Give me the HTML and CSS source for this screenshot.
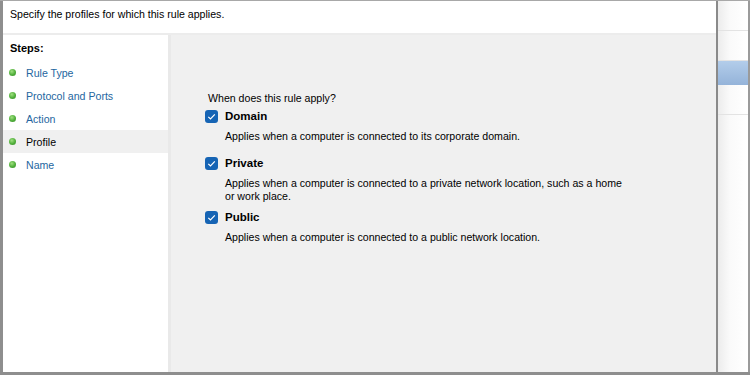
FILE: index.html
```html
<!DOCTYPE html>
<html lang="en">
<head>
    <meta charset="UTF-8">
    <meta name="viewport" content="width=device-width, initial-scale=1.0">
    <title>New Inbound Rule Wizard - Profile</title>
    <link rel="stylesheet" href="styles.css">
</head>
<body>
    <div class="screen">
        <div class="wizard">
            <header class="wizardHeader">
                <p class="headerText">Specify the profiles for which this rule applies.</p>
            </header>
            <div class="wizardBody">
                <nav class="steps">
                    <h3 class="stepsTitle">Steps:</h3>
                    <ul class="stepList">
                        <li class="step"><span class="dot"></span><a class="stepLink">Rule Type</a></li>
                        <li class="step"><span class="dot"></span><a class="stepLink">Protocol and Ports</a></li>
                        <li class="step"><span class="dot"></span><a class="stepLink">Action</a></li>
                        <li class="step current"><span class="dot"></span><a class="stepLink">Profile</a></li>
                        <li class="step"><span class="dot"></span><a class="stepLink">Name</a></li>
                    </ul>
                </nav>
                <main class="content">
                    <p class="question">When does this rule apply?</p>
                    <div class="option">
                        <label class="optionLabel"><span class="check"><svg viewBox="0 0 13 13" width="13" height="13"><path d="M3.3 6.8 L5.5 9 L9.8 4.4" fill="none" stroke="#fff" stroke-width="1.2"/></svg></span>Domain</label>
                        <p class="optionDesc">Applies when a computer is connected to its corporate domain.</p>
                    </div>
                    <div class="option">
                        <label class="optionLabel"><span class="check"><svg viewBox="0 0 13 13" width="13" height="13"><path d="M3.3 6.8 L5.5 9 L9.8 4.4" fill="none" stroke="#fff" stroke-width="1.2"/></svg></span>Private</label>
                        <p class="optionDesc">Applies when a computer is connected to a private network location, such as a home<br>or work place.</p>
                    </div>
                    <div class="option tight">
                        <label class="optionLabel"><span class="check"><svg viewBox="0 0 13 13" width="13" height="13"><path d="M3.3 6.8 L5.5 9 L9.8 4.4" fill="none" stroke="#fff" stroke-width="1.2"/></svg></span>Public</label>
                        <p class="optionDesc">Applies when a computer is connected to a public network location.</p>
                    </div>
                </main>
            </div>
        </div>
        <div class="behind">
            <div class="behindRow"></div>
            <div class="behindRow"></div>
            <div class="behindRow selected"></div>
            <div class="behindRow"></div>
        </div>
    </div>
</body>
</html>
```

FILE: styles.css
```css
html, body {
  margin: 0;
  padding: 0;
  width: 750px;
  height: 375px;
  overflow: hidden;
  font-family: "Liberation Sans", Arial, sans-serif;
  font-size: 10.6px;
  color: #000;
  background-color: #fff;
}

.screen {
  display: flex;
  height: 375px;
  box-sizing: border-box;
  border-top: 1px solid #a8a8a8;
  border-bottom: 3px solid #8e8e8e;
}

.wizard {
  width: 718px;
  display: flex;
  flex-direction: column;
  box-sizing: border-box;
  border-left: 3px solid #8e8e8e;
  border-right: 2px solid #8a8a8a;
}

.wizardHeader {
  height: 32px;
  background-color: #fff;
  border-bottom: 2px solid #ececec;
  padding-left: 7px;

  .headerText {
    margin: 0;
    line-height: 24px;
    padding-top: 1px;
  }
}

.wizardBody {
  flex: 1;
  display: flex;
}

.steps {
  width: 165px;
  background-color: #fff;
  border-right: 3px solid #e9e9e9;

  .stepsTitle {
    margin: 0;
    font-size: 11px;
    font-weight: 700;
    line-height: 24px;
    padding: 1px 0 0 7px;
  }
}

.stepList {
  list-style: none;
  margin: 1px 0 0 0;
  padding: 0;

  .step {
    height: 23px;
    display: flex;
    align-items: center;
    padding-left: 6px;
  }

  .current {
    background-color: #f0f0f0;

    .stepLink {
      color: #000;
    }
  }

  .dot {
    width: 7px;
    height: 7px;
    border-radius: 50%;
    background: radial-gradient(circle at 40% 35%, #9fe07f 0%, #4fae3a 55%, #3a8a2b 100%);
    margin-right: 10px;
  }

  .stepLink {
    color: #2466a0;
  }
}

.content {
  flex: 1;
  background-color: #f0f0f0;
  padding: 55px 0 0 34px;

  .question {
    margin: 0 0 2px 3px;
    line-height: 16px;
  }
}

.option {
  margin-bottom: 12px;

  .optionLabel {
    display: flex;
    align-items: center;
    font-weight: 700;
    font-size: 11.5px;
    line-height: 16px;
  }

  .check {
    width: 13px;
    height: 13px;
    border-radius: 3px;
    background-color: #1664b4;
    margin-right: 7px;
    display: flex;
  }

  .optionDesc {
    margin: 6px 0 0 20px;
    line-height: 13px;
  }
}

.option.tight {
  margin-top: -6px;
}

.behind {
  flex: 1;
  display: flex;
  flex-direction: column;
  background: linear-gradient(to right, #ececec 0%, #fafafa 40%, #fff 100%);
  border-right: 2px solid #9a9a9a;

  .behindRow {
    height: 29px;
    border-bottom: 1px solid #e3e3e3;
  }

  .selected {
    height: 24px;
    background: linear-gradient(to bottom, #b3cdea, #94b3d9);
    border-bottom: none;
  }
}
```
